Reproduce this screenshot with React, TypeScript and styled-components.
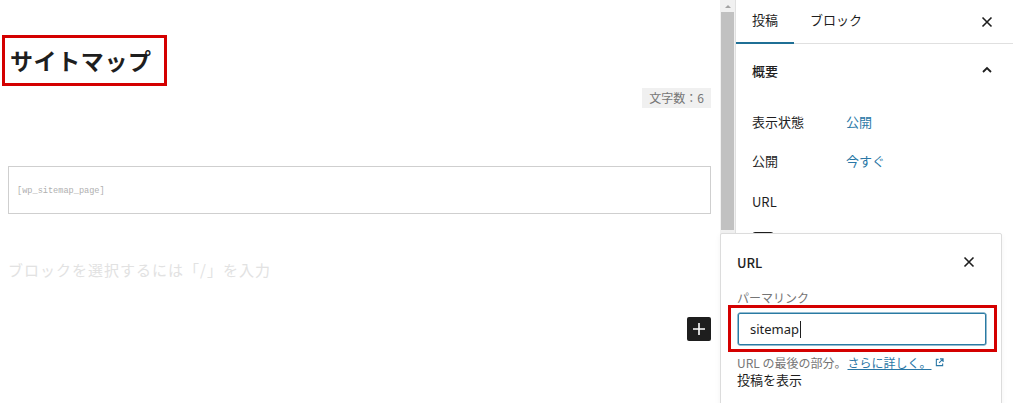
import React from 'react'
import styled, { createGlobalStyle } from 'styled-components'

const GlobalStyle = createGlobalStyle`
    html, body {
        margin: 0;
        padding: 0;
        background: #fff;
        overflow: hidden;
    }
    body {
        font-family: "Noto Sans CJK JP", "Noto Sans", sans-serif;
        color: #1e1e1e;
        text-spacing-trim: space-all;
    }
`

const Page = styled.div`
    position: relative;
    display: flex;
    width: 1013px;
    height: 403px;
    overflow: hidden;
`

const Editor = styled.div`
    width: 720px;
    box-sizing: border-box;
    padding: 35px 9px 0 8px;
    display: flex;
    flex-direction: column;
`

const TitleBox = styled.div`
    align-self: flex-start;
    margin-left: -6px;
    border: 3px solid #d40000;
    padding: 6px 12px 7px 5px;
    h1 {
        margin: 0;
        font-size: 23px;
        line-height: 32px;
        font-weight: 700;
        letter-spacing: 0.6px;
        color: #1e1e1e;
    }
`

const CountBadge = styled.div`
    align-self: flex-end;
    margin-top: 2px;
    background: #f0f0f0;
    color: #757575;
    font-size: 12px;
    line-height: 20px;
    padding: 0 7px;
`

const ShortcodeBlock = styled.div`
    margin-top: 58px;
    height: 48px;
    box-sizing: border-box;
    border: 1px solid #cfcfcf;
    display: flex;
    align-items: center;
    padding: 2px 8px 0;
    font-family: "Liberation Mono", "DejaVu Sans Mono", monospace;
    font-size: 8.6px;
    color: #b0b0b0;
`

const Placeholder = styled.p`
    margin: 46px 0 0;
    font-size: 15px;
    line-height: 20px;
    letter-spacing: 1px;
    color: #e2e2e2;
`

const InserterRow = styled.div`
    display: flex;
    justify-content: flex-end;
    margin-top: 37px;
`

const PlusButton = styled.div`
    width: 24px;
    height: 24px;
    border-radius: 2px;
    background: #1e1e1e;
    color: #fff;
    display: flex;
    align-items: center;
    justify-content: center;
`

const Scrollbar = styled.div`
    width: 15px;
    background: #f1f1f1;
    display: flex;
    flex-direction: column;
    align-items: center;
`

const ScrollArrow = styled.div`
    height: 12px;
    display: flex;
    align-items: center;
    justify-content: center;
    &::before {
        content: '';
        border-left: 3px solid transparent;
        border-right: 3px solid transparent;
        border-bottom: 3px solid #a3a3a3;
    }
`

const ScrollThumb = styled.div`
    width: 13px;
    height: 218px;
    background: #c1c1c1;
`

const Sidebar = styled.div`
    flex: 1;
    border-left: 1px solid #e0e0e0;
    display: flex;
    flex-direction: column;
`

const TabBar = styled.div`
    height: 43px;
    border-bottom: 1px solid #e0e0e0;
    display: flex;
    align-items: stretch;
    padding-right: 14px;
`

const Tab = styled.div<{ $active?: boolean }>`
    display: flex;
    align-items: center;
    padding: 0 16px 6px;
    font-size: 13px;
    color: #1e1e1e;
    margin-bottom: -1px;
    box-shadow: ${p => (p.$active ? 'inset 0 -2px 0 #1f6f95' : 'none')};
`

const IconButton = styled.div`
    margin-left: auto;
    display: flex;
    align-items: center;
    justify-content: center;
    width: 24px;
`

const PanelHeader = styled.div`
    height: 52px;
    display: flex;
    align-items: center;
    padding: 0 14px 0 16px;
    font-size: 13px;
    font-weight: 500;
`

const PanelRow = styled.div<{ $h: number }>`
    height: ${p => p.$h}px;
    display: flex;
    align-items: center;
    padding-left: 16px;
    font-size: 13px;
`

const RowLabel = styled.span`
    width: 94px;
`

const RowLink = styled.span`
    color: #2a77a6;
`

const SmallBox = styled.div`
    margin: 5px 0 0 16px;
    width: 20px;
    height: 20px;
    border: 1px solid #1e1e1e;
    border-radius: 3px;
`

const Popover = styled.div`
    position: absolute;
    left: 720px;
    top: 233px;
    width: 282px;
    height: 200px;
    box-sizing: border-box;
    background: #fff;
    border: 1px solid #dcdcdc;
    border-radius: 2px;
    box-shadow: 0 2px 6px rgba(0, 0, 0, 0.05);
    padding: 17px 15px 0 16px;
`

const PopoverHeader = styled.div`
    display: flex;
    align-items: center;
    height: 22px;
    font-size: 13px;
    font-weight: 500;
    padding-right: 5px;
`

const FieldLabel = styled.div`
    margin-top: 17px;
    font-size: 12px;
    line-height: 16px;
    color: #757575;
`

const Highlight = styled.div`
    margin: -1px -11px 0 -9px;
    border: 3px solid #d40000;
    padding: 5px 8px 4px 7px;
`

const TextInput = styled.div`
    height: 32px;
    box-sizing: border-box;
    border: 1px solid #2a7aa3;
    box-shadow: 0 0 0 0.5px #2a7aa3;
    border-radius: 2px;
    display: flex;
    align-items: center;
    padding: 0 11px;
    font-family: "Noto Sans", sans-serif;
    font-size: 13px;
    color: #1e1e1e;
`

const Caret = styled.span`
    display: inline-block;
    width: 1px;
    height: 17px;
    background: #1e1e1e;
    margin-left: 1px;
`

const Help = styled.div`
    margin-top: 2px;
    font-size: 12px;
    line-height: 17px;
    color: #757575;
    display: flex;
    align-items: center;
    a {
        color: #2a77a6;
        text-decoration: underline;
        margin-left: 1px;
    }
    svg {
        margin-left: 3px;
    }
`

const ViewLink = styled.div`
    font-size: 13px;
    line-height: 17px;
    color: #1e1e1e;
`

const CloseIcon = ({ size = 12 }: { size?: number }) => (
    <svg width={size} height={size} viewBox="0 0 12 12">
        <path d="M1.5 1.5 L10.5 10.5 M10.5 1.5 L1.5 10.5" stroke="#1e1e1e" strokeWidth="1.6" fill="none" />
    </svg>
)

const App = () => {
    return (
        <>
            <GlobalStyle />
            <Page>
                <Editor>
                    <TitleBox>
                        <h1>サイトマップ</h1>
                    </TitleBox>
                    <CountBadge>文字数：6</CountBadge>
                    <ShortcodeBlock>[wp_sitemap_page]</ShortcodeBlock>
                    <Placeholder>ブロックを選択するには「/」を入力</Placeholder>
                    <InserterRow>
                        <PlusButton>
                            <svg width="14" height="14" viewBox="0 0 14 14">
                                <path d="M7 1 V13 M1 7 H13" stroke="#fff" strokeWidth="1.6" />
                            </svg>
                        </PlusButton>
                    </InserterRow>
                </Editor>
                <Scrollbar>
                    <ScrollArrow />
                    <ScrollThumb />
                </Scrollbar>
                <Sidebar>
                    <TabBar>
                        <Tab $active>投稿</Tab>
                        <Tab>ブロック</Tab>
                        <IconButton>
                            <CloseIcon />
                        </IconButton>
                    </TabBar>
                    <PanelHeader>
                        概要
                        <IconButton>
                            <svg width="12" height="8" viewBox="0 0 12 8">
                                <path d="M2 6 L6 2 L10 6" stroke="#1e1e1e" strokeWidth="1.8" fill="none" />
                            </svg>
                        </IconButton>
                    </PanelHeader>
                    <PanelRow $h={48} style={{ marginTop: 1 }}>
                        <RowLabel>表示状態</RowLabel>
                        <RowLink>公開</RowLink>
                    </PanelRow>
                    <PanelRow $h={30}>
                        <RowLabel>公開</RowLabel>
                        <RowLink>今すぐ</RowLink>
                    </PanelRow>
                    <PanelRow $h={52}>
                        <RowLabel>URL</RowLabel>
                    </PanelRow>
                    <SmallBox />
                </Sidebar>
                <Popover>
                    <PopoverHeader>
                        URL
                        <IconButton>
                            <CloseIcon />
                        </IconButton>
                    </PopoverHeader>
                    <FieldLabel>パーマリンク</FieldLabel>
                    <Highlight>
                        <TextInput>
                            sitemap<Caret />
                        </TextInput>
                    </Highlight>
                    <Help>
                        URL の最後の部分。
                        <a>さらに詳しく。</a>
                        <svg width="9" height="9" viewBox="0 0 10 10">
                            <path d="M4 1.5 H1.5 V8.5 H8.5 V6 M5.5 1 H9 V4.5 M9 1 L4.5 5.5" stroke="#2a77a6" strokeWidth="1.2" fill="none" />
                        </svg>
                    </Help>
                    <ViewLink>投稿を表示</ViewLink>
                </Popover>
            </Page>
        </>
    )
}

export default App
